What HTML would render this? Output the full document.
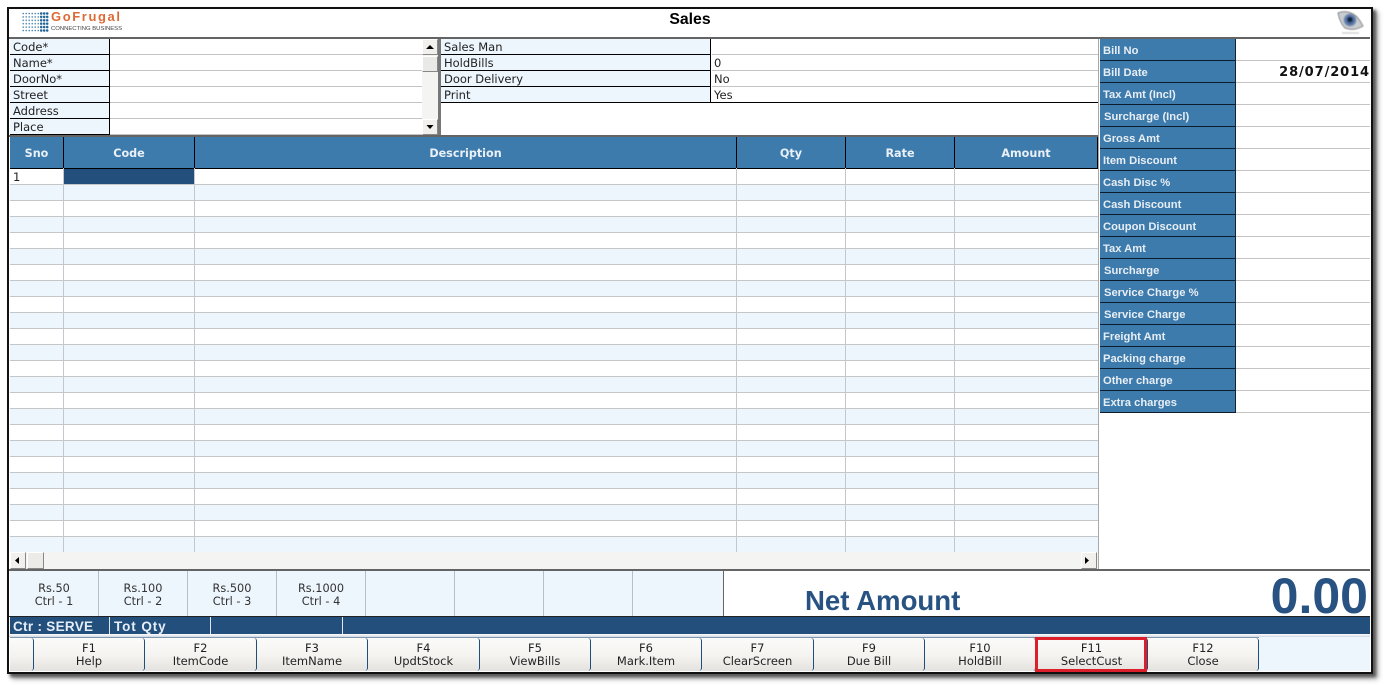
<!DOCTYPE html>
<html><head><meta charset="utf-8"><title>Sales</title>
<style>
html,body{margin:0;padding:0;background:#fff;width:1385px;height:685px;overflow:hidden}
#f{position:absolute;left:7px;top:7px;width:1362px;height:663px;border:2px solid #111;background:#fff;box-shadow:3px 3px 3px #555,5px 5px 5px #aaa}
.a,.t,.c{position:absolute}
#r{position:absolute;left:0;top:0;width:1385px;height:685px;font:11.5px/14px "DejaVu Sans","Liberation Sans",sans-serif;color:#222}
.t{white-space:nowrap}
.c{text-align:center;white-space:nowrap}
.h{font-weight:bold;color:#e9f0f7;font-size:11.2px;line-height:14px;top:147px}
.l{left:10px;width:99px;height:15px;background:#edf5fd;border-bottom:1px solid #000;text-indent:3px;line-height:16px;overflow:hidden}
.m{left:441px;width:270px;height:15px;background:#edf5fd;border-bottom:1px solid #000;text-indent:3px;line-height:16px;overflow:hidden}
.b{left:1100px;width:135px;height:21px;background:#3d7bac;border-bottom:1px solid #0c1c2c;color:#e8eef5;font:bold 11.2px/25px "Liberation Sans",sans-serif;text-indent:3px;overflow:hidden}
.btn{top:638px;height:33px;background:linear-gradient(#fbfbf9,#f4f3f0 55%,#e3e2de);border-right:1px solid #1d4e7c;border-radius:0 3px 3px 0;text-align:center;line-height:13px;padding-top:4px;box-sizing:border-box;color:#222}
.d{top:571px;height:45px;background:#edf5fd;border-right:1px solid #b9bec4;text-align:center;line-height:13px;box-sizing:border-box;padding-top:11px;color:#333;font-size:11.3px}
.sb{background:#f1f0ec;border:1px solid;border-color:#fff #888 #888 #fff;box-sizing:border-box}
</style></head><body>
<div id="f"></div>
<div id="r">

<!-- logo -->
<svg class="a" style="left:20px;top:11px" width="31" height="22">
<defs>
<pattern id="p1" x="2" y="1" width="3" height="3.400" patternUnits="userSpaceOnUse"><circle cx="1.200" cy="1.500" r="0.800" fill="#3a7aa8"/></pattern>
<pattern id="p2" x="2" y="1" width="3" height="3.400" patternUnits="userSpaceOnUse"><circle cx="1.200" cy="1.500" r="1.300" fill="#1f6296"/></pattern>
</defs>
<rect x="2" y="1" width="17" height="20.400" fill="url(#p1)"/>
<rect x="20" y="1" width="9" height="20.400" fill="url(#p2)"/>
</svg>
<div class="t" style="left:51px;top:9px;font:bold 13px/15px 'Liberation Sans',sans-serif;color:#dc6a35;letter-spacing:1.600px">GoFrugal</div>
<div class="t" style="left:51px;top:25px;font:5.900px/8px 'Liberation Sans',sans-serif;color:#444">CONNECTING BUSINESS</div>

<div class="c" style="left:590px;width:200px;top:11px;font:bold 15.800px/17px 'Liberation Sans',sans-serif;color:#000">Sales</div>

<!-- eye icon -->
<svg class="a" style="left:1335px;top:9px" width="30" height="28">
<defs><radialGradient id="e1"><stop offset="0" stop-color="#1c3558"/><stop offset=".55" stop-color="#4a6a9c"/><stop offset="1" stop-color="#8a9cb8"/></radialGradient>
<filter id="b1"><feGaussianBlur stdDeviation=".5"/></filter></defs>
<g filter="url(#b1)">
<path d="M3 4 C9 1 17 3 22 8 C25 11 26 14 28 17 C22 21 15 21 10 19 C6 15 4 9 3 4Z" fill="#c9ccd0" stroke="#888"/>
<circle cx="15" cy="11" r="6.500" fill="url(#e1)"/>
<circle cx="15" cy="10.500" r="2.400" fill="#15243f"/>
<rect x="7" y="23" width="17" height="2" fill="#ddd"/>
</g>
</svg>

<!-- top separators -->
<div class="a" style="left:9px;top:37px;width:1361px;height:2px;background:#646464"></div>
<div class="a" style="left:9px;top:135px;width:1089px;height:2px;background:#646464"></div>

<!-- customer form -->
<div class="a" style="left:110px;top:39px;width:312px;height:96px;background:#fff repeating-linear-gradient(#fff 0,#fff 15px,#c4c4c4 15px,#c4c4c4 16px)"></div>
<div class="a l" style="top:39px">Code*</div>
<div class="a l" style="top:55px">Name*</div>
<div class="a l" style="top:71px">DoorNo*</div>
<div class="a l" style="top:87px">Street</div>
<div class="a l" style="top:103px">Address</div>
<div class="a l" style="top:119px">Place</div>
<div class="a" style="left:109px;top:39px;width:1px;height:96px;background:#000"></div>
<!-- v scroll -->
<div class="a" style="left:422px;top:39px;width:16px;height:96px;background:#f4f4f2"></div>
<div class="a sb" style="left:422px;top:39px;width:16px;height:16px"></div>
<div class="a sb" style="left:422px;top:56px;width:16px;height:16px;background:#e9e9e7"></div>
<div class="a sb" style="left:422px;top:119px;width:16px;height:16px"></div>
<svg class="a" style="left:422px;top:39px" width="16" height="96"><path d="M4 10L8 6L12 10Z M4.500 86L11.500 86L8 90Z" fill="#000"/></svg>
<div class="a" style="left:438px;top:39px;width:3px;height:96px;background:#777"></div>

<!-- middle form -->
<div class="a" style="left:712px;top:39px;width:386px;height:64px;background:repeating-linear-gradient(#fff 0,#fff 15px,#c4c4c4 15px,#c4c4c4 16px)"></div>
<div class="a m" style="top:39px">Sales Man</div>
<div class="a m" style="top:55px">HoldBills</div>
<div class="a m" style="top:71px">Door Delivery</div>
<div class="a m" style="top:87px">Print</div>
<div class="a" style="left:441px;top:102px;width:657px;height:1px;background:#000"></div>
<div class="a" style="left:710px;top:39px;width:1px;height:64px;background:#000"></div>
<div class="t" style="left:714px;top:56px">0</div>
<div class="t" style="left:714px;top:72px">No</div>
<div class="t" style="left:714px;top:88px">Yes</div>

<!-- grid -->
<div class="a" style="left:10px;top:137px;width:1088px;height:31px;background:#3d7bac"></div>
<div class="a" style="left:10px;top:168px;width:1088px;height:1px;background:#000"></div>
<div class="a" style="left:10px;top:169px;width:1088px;height:384px;background:repeating-linear-gradient(#fff 0,#fff 15px,#c4c6c8 15px,#c4c6c8 16px,#edf5fd 16px,#edf5fd 31px,#c4c6c8 31px,#c4c6c8 32px)"></div>
<div class="a" style="left:63px;top:137px;width:1px;height:416px;background:linear-gradient(#000 0,#000 31px,#c4c8cc 31px)"></div>
<div class="a" style="left:194px;top:137px;width:1px;height:416px;background:linear-gradient(#000 0,#000 31px,#c4c8cc 31px)"></div>
<div class="a" style="left:736px;top:137px;width:1px;height:416px;background:linear-gradient(#000 0,#000 31px,#c4c8cc 31px)"></div>
<div class="a" style="left:845px;top:137px;width:1px;height:416px;background:linear-gradient(#000 0,#000 31px,#c4c8cc 31px)"></div>
<div class="a" style="left:954px;top:137px;width:1px;height:416px;background:linear-gradient(#000 0,#000 31px,#c4c8cc 31px)"></div>
<div class="a" style="left:1097px;top:137px;width:1px;height:31px;background:#000"></div>
<div class="c h" style="left:10px;width:53px">Sno</div>
<div class="c h" style="left:64px;width:130px">Code</div>
<div class="c h" style="left:195px;width:541px">Description</div>
<div class="c h" style="left:737px;width:108px">Qty</div>
<div class="c h" style="left:846px;width:108px">Rate</div>
<div class="c h" style="left:955px;width:142px">Amount</div>
<div class="t" style="left:13px;top:170px">1</div>
<div class="a" style="left:64px;top:169px;width:130px;height:15px;background:#234f7d"></div>

<!-- h scroll -->
<div class="a" style="left:10px;top:552px;width:1088px;height:17px;background:#f4f4f2"></div>
<div class="a sb" style="left:10px;top:552px;width:16px;height:17px"></div>
<div class="a sb" style="left:27px;top:552px;width:17px;height:17px;background:#ecebe8"></div>
<div class="a sb" style="left:1081px;top:552px;width:16px;height:17px"></div>
<svg class="a" style="left:10px;top:552px" width="1088" height="17"><path d="M9 5L9 12L5 8.500Z M1075 5L1075 12L1079 8.500Z" fill="#000"/></svg>
<div class="a" style="left:1098px;top:39px;width:1px;height:530px;background:#a8a8a8"></div>

<!-- right panel -->
<div class="a" style="left:1236px;top:39px;width:134px;height:374px;background:repeating-linear-gradient(#fff 0,#fff 21px,#c4c4c4 21px,#c4c4c4 22px)"></div>
<div class="a b" style="top:39px">Bill No</div>
<div class="a b" style="top:61px">Bill Date</div>
<div class="a b" style="top:83px">Tax Amt (Incl)</div>
<div class="a b" style="top:105px;text-indent:4px">Surcharge (Incl)</div>
<div class="a b" style="top:127px">Gross Amt</div>
<div class="a b" style="top:149px">Item Discount</div>
<div class="a b" style="top:171px">Cash Disc %</div>
<div class="a b" style="top:193px">Cash Discount</div>
<div class="a b" style="top:215px">Coupon Discount</div>
<div class="a b" style="top:237px">Tax Amt</div>
<div class="a b" style="top:259px;text-indent:4px">Surcharge</div>
<div class="a b" style="top:281px;text-indent:4px">Service Charge %</div>
<div class="a b" style="top:303px;text-indent:4px">Service Charge</div>
<div class="a b" style="top:325px">Freight Amt</div>
<div class="a b" style="top:347px">Packing charge</div>
<div class="a b" style="top:369px">Other charge</div>
<div class="a b" style="top:391px">Extra charges</div>
<div class="a" style="left:1235px;top:39px;width:1px;height:374px;background:#123"></div>
<div class="t" style="right:15px;top:65px;font:bold 13px/15px 'DejaVu Sans',sans-serif;color:#111;letter-spacing:.9px">28/07/2014</div>

<!-- bottom -->
<div class="a" style="left:9px;top:569px;width:1361px;height:2px;background:#646464"></div>
<div class="a d" style="left:10px;width:89px">Rs.50<br>Ctrl - 1</div>
<div class="a d" style="left:99px;width:89px">Rs.100<br>Ctrl - 2</div>
<div class="a d" style="left:188px;width:89px">Rs.500<br>Ctrl - 3</div>
<div class="a d" style="left:277px;width:89px">Rs.1000<br>Ctrl - 4</div>
<div class="a d" style="left:366px;width:89px"></div>
<div class="a d" style="left:455px;width:89px"></div>
<div class="a d" style="left:544px;width:89px"></div>
<div class="a d" style="left:633px;width:91px;border-right-color:#666"></div>
<div class="t" style="left:805px;top:584px;font:bold 27.600px/34px 'Liberation Sans',sans-serif;color:#275282">Net Amount</div>
<div class="t" style="right:17px;top:568px;font:bold 50px/57px 'Liberation Sans',sans-serif;color:#275282">0.00</div>

<!-- status -->
<div class="a" style="left:9px;top:616px;width:1361px;height:1px;background:#222"></div>
<div class="a" style="left:10px;top:617px;width:1360px;height:17px;background:#234f7d"></div>
<div class="a" style="left:109px;top:617px;width:1px;height:17px;background:#dfe6ee"></div>
<div class="a" style="left:210px;top:617px;width:1px;height:17px;background:#dfe6ee"></div>
<div class="a" style="left:342px;top:617px;width:1px;height:17px;background:#dfe6ee"></div>
<div class="t" style="left:13px;top:619px;font:bold 13.500px/15px 'Liberation Sans',sans-serif;color:#e6eef8;letter-spacing:.3px">Ctr : SERVE</div>
<div class="t" style="left:114px;top:619px;font:bold 13.500px/15px 'Liberation Sans',sans-serif;color:#e6eef8;letter-spacing:.9px">Tot Qty</div>

<!-- function keys -->
<div class="a" style="left:9px;top:634px;width:1361px;height:3px;background:linear-gradient(#fff,#cfd8e2)"></div>
<div class="a" style="left:10px;top:637px;width:1360px;height:34px;background:#edf5fd"></div>
<div class="a" style="left:10px;top:637px;width:1249px;height:1px;background:#7f97ae"></div>
<div class="a btn" style="left:10px;width:24px"></div>
<div class="a btn" style="left:34px;width:111px">F1<br>Help</div>
<div class="a btn" style="left:145px;width:112px">F2<br>ItemCode</div>
<div class="a btn" style="left:257px;width:111px">F3<br>ItemName</div>
<div class="a btn" style="left:368px;width:112px">F4<br>UpdtStock</div>
<div class="a btn" style="left:480px;width:111px">F5<br>ViewBills</div>
<div class="a btn" style="left:591px;width:111px">F6<br>Mark.Item</div>
<div class="a btn" style="left:702px;width:112px">F7<br>ClearScreen</div>
<div class="a btn" style="left:814px;width:111px">F9<br>Due Bill</div>
<div class="a btn" style="left:925px;width:111px">F10<br>HoldBill</div>
<div class="a btn" style="left:1036px;width:112px">F11<br>SelectCust</div>
<div class="a btn" style="left:1148px;width:111px">F12<br>Close</div>
<div class="a" style="left:1035px;top:637px;width:112px;height:35px;box-sizing:border-box;border:3px solid #dc1f2a"></div>

</div>
</body></html>
